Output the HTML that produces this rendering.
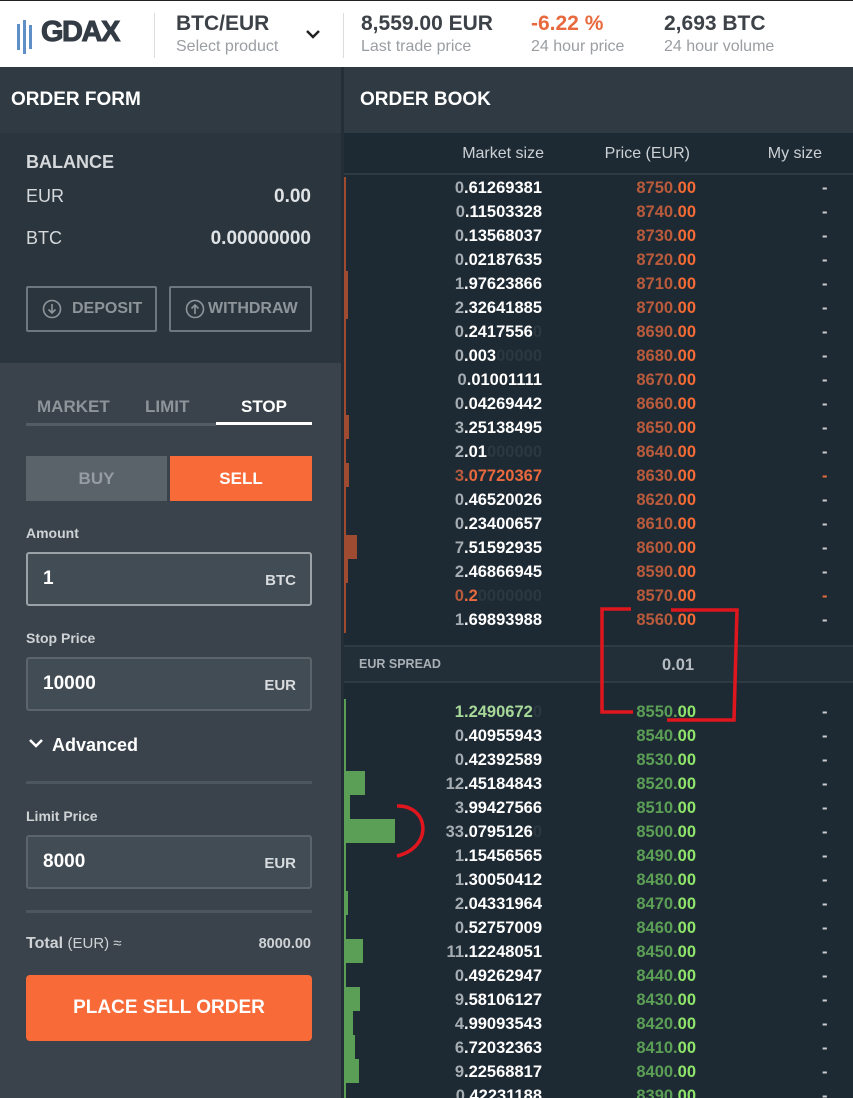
<!DOCTYPE html>
<html><head><meta charset="utf-8"><style>
*{margin:0;padding:0;box-sizing:border-box}
html,body{width:853px;height:1098px;overflow:hidden}
body{background:#1e2a33;font-family:"Liberation Sans",sans-serif;position:relative}
.hdr{position:absolute;left:0;top:0;width:853px;height:67px;background:#fff;border-top:1px solid #222}
.hdr .t{position:absolute;font-weight:bold;font-size:21px;color:#3d4248;top:11px}
.hdr .s{position:absolute;font-size:16px;color:#9a9ea2;top:37px}
.vs{position:absolute;top:12px;width:1px;height:45px;background:#ddd}
.left{position:absolute;left:0;top:67px;width:341px;height:1031px;background:#3a434b}
.sep{position:absolute;left:341px;top:67px;width:3px;height:1031px;background:#242e36}
.ph{position:absolute;height:66px;background:#2f3a42;color:#fff;font-weight:bold;font-size:19px;padding:22px 0 0 11px}
.bal{position:absolute;left:0;top:66px;width:341px;height:230px;background:#2b353d}
.w{color:#fff;font-weight:bold}
.lbl{position:absolute;color:#d5d9dc;font-size:18px}
.val{position:absolute;color:#dfe3e6;font-weight:bold;font-size:19px;right:30px}
.ob{position:absolute;border:2px solid #6e777e;border-radius:2px;color:#8d959b;font-weight:bold;font-size:16px;height:46px;top:219px}
.ob svg{position:absolute;left:14px;top:11px}
.tab{position:absolute;top:330px;font-weight:bold;font-size:17px;color:#8d959b}
.in{position:absolute;left:26px;width:286px;height:54px;border:2px solid #5b646b;border-radius:3px;background:#424c54}
.in b{position:absolute;left:15px;top:14px;font-size:19px;color:#fff}
.in i{position:absolute;right:14px;top:18px;font-size:15px;color:#d8dcdf;font-style:normal;font-weight:bold}
.fl{position:absolute;left:26px;font-weight:bold;font-size:14px;color:#cfd3d6}
.hr{position:absolute;left:26px;width:286px;height:3px;background:#4c565e}
.book{position:absolute;left:344px;top:67px;width:509px;height:1031px;background:#1e2a33}
.r{position:absolute;left:0;width:509px;height:24px;font-weight:bold;font-size:16.5px}
.r .z{position:absolute;right:311px;top:4px;color:#fff;white-space:nowrap}
.r .z u{color:#a5adb3;text-decoration:none}
.r .z s{color:#2c3740;text-decoration:none}
.r .p{position:absolute;right:157px;top:4px}
.r .d{position:absolute;left:478px;top:4px;color:#ccc}
.a .p{color:#b85a3c}.a .p em{color:#f26a36;font-style:normal}
.b .p{color:#5b9e55}.b .p em{color:#8ee56b;font-style:normal}
.bar{position:absolute;left:0;top:0;height:24px}
.a .bar{background:#9e4b31}.b .bar{background:#5b9e55}
</style></head><body>
<div class="hdr">
<svg style="position:absolute;left:17px;top:19px" width="22" height="34"><rect x="0" y="4" width="3" height="26" fill="#5e8fc6"/><rect x="6" y="0" width="3" height="34" fill="#5e8fc6"/><rect x="12" y="5" width="3" height="24" fill="#5e8fc6"/></svg>
<div class="t" style="left:41px;top:15px;font-size:29px;color:#333b45;letter-spacing:-1.5px;-webkit-text-stroke:1px #333b45">GDAX</div>
<div class="vs" style="left:154px"></div>
<div class="t" style="left:176px">BTC/EUR</div><div class="s" style="left:176px">Select product</div>
<svg style="position:absolute;left:305px;top:28px" width="16" height="12"><path d="M2 2 L8 8 L14 2" stroke="#222" stroke-width="2.5" fill="none"/></svg>
<div class="vs" style="left:343px"></div>
<div class="t" style="left:361px">8,559.00 EUR</div><div class="s" style="left:361px">Last trade price</div>
<div class="t" style="left:531px;color:#e8693e">-6.22 %</div><div class="s" style="left:531px">24 hour price</div>
<div class="t" style="left:664px">2,693 BTC</div><div class="s" style="left:664px">24 hour volume</div>
</div>
<div class="left">
<div class="ph" style="left:0;top:0;width:341px">ORDER FORM</div>
<div class="bal">
<div class="lbl w" style="left:26px;top:19px">BALANCE</div>
<div class="lbl" style="left:26px;top:53px">EUR</div><div class="val" style="top:53px">0.00</div>
<div class="lbl" style="left:26px;top:95px">BTC</div><div class="val" style="top:95px">0.00000000</div>
</div>
<div class="ob" style="left:26px;width:131px"><svg width="20" height="20"><circle cx="10" cy="10" r="8.5" stroke="#8d959b" stroke-width="1.6" fill="none"/><path d="M10 5v9M6.5 10.5 10 14l3.5-3.5" stroke="#8d959b" stroke-width="1.6" fill="none"/></svg><span style="position:absolute;left:44px;top:12px">DEPOSIT</span></div>
<div class="ob" style="left:169px;width:143px"><svg width="20" height="20"><circle cx="10" cy="10" r="8.5" stroke="#8d959b" stroke-width="1.6" fill="none"/><path d="M10 15V6M6.5 9.5 10 6l3.5 3.5" stroke="#8d959b" stroke-width="1.6" fill="none"/></svg><span style="position:absolute;left:37px;top:12px">WITHDRAW</span></div>
<div class="tab" style="left:37px">MARKET</div>
<div class="tab" style="left:145px">LIMIT</div>
<div class="tab" style="left:241px;color:#fff">STOP</div>
<div style="position:absolute;left:26px;top:356px;width:190px;height:3px;background:#535c63"></div>
<div style="position:absolute;left:216px;top:355px;width:96px;height:3px;background:#fff"></div>
<div style="position:absolute;left:26px;top:389px;width:141px;height:45px;background:#5a636a;color:#959da3;font-weight:bold;font-size:17px;text-align:center;line-height:45px">BUY</div>
<div style="position:absolute;left:170px;top:389px;width:142px;height:45px;background:#f86a38;color:#fff;font-weight:bold;font-size:17px;text-align:center;line-height:45px">SELL</div>
<div class="fl" style="top:458px">Amount</div>
<div class="in" style="top:485px;border-color:#9ba3a9"><b>1</b><i>BTC</i></div>
<div class="fl" style="top:563px">Stop Price</div>
<div class="in" style="top:590px"><b>10000</b><i>EUR</i></div>
<svg style="position:absolute;left:28px;top:671px" width="16" height="12"><path d="M2 2 L8 8 L14 2" stroke="#fff" stroke-width="2.5" fill="none"/></svg>
<div class="fl" style="left:52px;top:668px;font-size:18px;color:#fff">Advanced</div>
<div class="hr" style="top:714px"></div>
<div class="fl" style="top:741px">Limit Price</div>
<div class="in" style="top:768px"><b>8000</b><i>EUR</i></div>
<div class="hr" style="top:843px"></div>
<div class="fl" style="top:868px;font-size:16px;color:#cfd3d6">Total <span style="font-weight:normal;font-size:15px">(EUR) ≈</span></div>
<div class="fl" style="left:auto;right:30px;top:869px;font-size:14.5px">8000.00</div>
<div style="position:absolute;left:26px;top:908px;width:286px;height:66px;background:#f86a38;border-radius:4px;color:#fff;font-weight:bold;font-size:19px;text-align:center;line-height:66px">PLACE SELL ORDER</div>
</div>
<div class="sep"></div>
<div class="book">
<div class="ph" style="left:0;top:0;width:509px;padding-left:16px">ORDER BOOK</div>
<div style="position:absolute;top:66px;left:0;width:509px;height:42px;border-bottom:2px solid #2f3a42;color:#ccd1d5;font-size:16px">
<span style="position:absolute;right:309px;top:12px">Market size</span><span style="position:absolute;right:163px;top:12px">Price (EUR)</span><span style="position:absolute;right:31px;top:12px">My size</span></div>
<div style="position:absolute;left:0;top:110px;width:2px;height:456px;background:#9e4b31"></div>
<div class="r a" style="top:108px"><div class="z"><u>0</u>.61269381</div><div class="p">8750.<em>00</em></div><div class="d">-</div></div>
<div class="r a" style="top:132px"><div class="z"><u>0</u>.11503328</div><div class="p">8740.<em>00</em></div><div class="d">-</div></div>
<div class="r a" style="top:156px"><div class="z"><u>0</u>.13568037</div><div class="p">8730.<em>00</em></div><div class="d">-</div></div>
<div class="r a" style="top:180px"><div class="z"><u>0</u>.02187635</div><div class="p">8720.<em>00</em></div><div class="d">-</div></div>
<div class="r a" style="top:204px"><div class="bar" style="width:4px"></div><div class="z"><u>1</u>.97623866</div><div class="p">8710.<em>00</em></div><div class="d">-</div></div>
<div class="r a" style="top:228px"><div class="bar" style="width:4px"></div><div class="z"><u>2</u>.32641885</div><div class="p">8700.<em>00</em></div><div class="d">-</div></div>
<div class="r a" style="top:252px"><div class="z"><u>0</u>.2417556<s>0</s></div><div class="p">8690.<em>00</em></div><div class="d">-</div></div>
<div class="r a" style="top:276px"><div class="z"><u>0</u>.003<s>00000</s></div><div class="p">8680.<em>00</em></div><div class="d">-</div></div>
<div class="r a" style="top:300px"><div class="z"><u>0</u>.01001111</div><div class="p">8670.<em>00</em></div><div class="d">-</div></div>
<div class="r a" style="top:324px"><div class="z"><u>0</u>.04269442</div><div class="p">8660.<em>00</em></div><div class="d">-</div></div>
<div class="r a" style="top:348px"><div class="bar" style="width:5px"></div><div class="z"><u>3</u>.25138495</div><div class="p">8650.<em>00</em></div><div class="d">-</div></div>
<div class="r a" style="top:372px"><div class="bar" style="width:2px"></div><div class="z"><u>2</u>.01<s>000000</s></div><div class="p">8640.<em>00</em></div><div class="d">-</div></div>
<div class="r a" style="top:396px"><div class="bar" style="width:5px"></div><div class="z" style="color:#e8693e"><u style="color:#b85a3c">3</u>.07720367</div><div class="p">8630.<em>00</em></div><div class="d" style="color:#e8693e">-</div></div>
<div class="r a" style="top:420px"><div class="z"><u>0</u>.46520026</div><div class="p">8620.<em>00</em></div><div class="d">-</div></div>
<div class="r a" style="top:444px"><div class="z"><u>0</u>.23400657</div><div class="p">8610.<em>00</em></div><div class="d">-</div></div>
<div class="r a" style="top:468px"><div class="bar" style="width:13px"></div><div class="z"><u>7</u>.51592935</div><div class="p">8600.<em>00</em></div><div class="d">-</div></div>
<div class="r a" style="top:492px"><div class="bar" style="width:4px"></div><div class="z"><u>2</u>.46866945</div><div class="p">8590.<em>00</em></div><div class="d">-</div></div>
<div class="r a" style="top:516px"><div class="z" style="color:#e8693e"><u style="color:#b85a3c">0</u>.2<s>0000000</s></div><div class="p">8570.<em>00</em></div><div class="d" style="color:#e8693e">-</div></div>
<div class="r a" style="top:540px"><div class="z"><u>1</u>.69893988</div><div class="p">8560.<em>00</em></div><div class="d">-</div></div>
<div style="position:absolute;left:0;top:578px;width:509px;height:38px;background:#232f38;border-top:2px solid #2f3a42;border-bottom:2px solid #2f3a42">
<span style="position:absolute;left:15px;top:10px;font-weight:bold;font-size:12.5px;color:#a9b0b5">EUR SPREAD</span>
<span style="position:absolute;left:318px;top:9px;font-weight:bold;font-size:16.5px;color:#b5bbc0">0.01</span></div>
<div style="position:absolute;left:0;top:632px;width:2px;height:399px;background:#5b9e55"></div>
<div class="r b" style="top:632px"><div class="z" style="color:#a7d89a"><u style="color:#a7d89a">1</u>.2490672<s>0</s></div><div class="p">8550.<em>00</em></div><div class="d">-</div></div>
<div class="r b" style="top:656px"><div class="z"><u>0</u>.40955943</div><div class="p">8540.<em>00</em></div><div class="d">-</div></div>
<div class="r b" style="top:680px"><div class="z"><u>0</u>.42392589</div><div class="p">8530.<em>00</em></div><div class="d">-</div></div>
<div class="r b" style="top:704px"><div class="bar" style="width:21px"></div><div class="z"><u>12</u>.45184843</div><div class="p">8520.<em>00</em></div><div class="d">-</div></div>
<div class="r b" style="top:728px"><div class="bar" style="width:6px"></div><div class="z"><u>3</u>.99427566</div><div class="p">8510.<em>00</em></div><div class="d">-</div></div>
<div class="r b" style="top:752px"><div class="bar" style="width:51px"></div><div class="z"><u>33</u>.0795126<s>0</s></div><div class="p">8500.<em>00</em></div><div class="d">-</div></div>
<div class="r b" style="top:776px"><div class="z"><u>1</u>.15456565</div><div class="p">8490.<em>00</em></div><div class="d">-</div></div>
<div class="r b" style="top:800px"><div class="z"><u>1</u>.30050412</div><div class="p">8480.<em>00</em></div><div class="d">-</div></div>
<div class="r b" style="top:824px"><div class="bar" style="width:4px"></div><div class="z"><u>2</u>.04331964</div><div class="p">8470.<em>00</em></div><div class="d">-</div></div>
<div class="r b" style="top:848px"><div class="z"><u>0</u>.52757009</div><div class="p">8460.<em>00</em></div><div class="d">-</div></div>
<div class="r b" style="top:872px"><div class="bar" style="width:19px"></div><div class="z"><u>11</u>.12248051</div><div class="p">8450.<em>00</em></div><div class="d">-</div></div>
<div class="r b" style="top:896px"><div class="z"><u>0</u>.49262947</div><div class="p">8440.<em>00</em></div><div class="d">-</div></div>
<div class="r b" style="top:920px"><div class="bar" style="width:16px"></div><div class="z"><u>9</u>.58106127</div><div class="p">8430.<em>00</em></div><div class="d">-</div></div>
<div class="r b" style="top:944px"><div class="bar" style="width:9px"></div><div class="z"><u>4</u>.99093543</div><div class="p">8420.<em>00</em></div><div class="d">-</div></div>
<div class="r b" style="top:968px"><div class="bar" style="width:11px"></div><div class="z"><u>6</u>.72032363</div><div class="p">8410.<em>00</em></div><div class="d">-</div></div>
<div class="r b" style="top:992px"><div class="bar" style="width:15px"></div><div class="z"><u>9</u>.22568817</div><div class="p">8400.<em>00</em></div><div class="d">-</div></div>
<div class="r b" style="top:1016px"><div class="z"><u>0</u>.42231188</div><div class="p">8390.<em>00</em></div><div class="d">-</div></div>
<svg style="position:absolute;left:0;top:0" width="509" height="1031"><path d="M287 542 L258 542 L258 645 L289 645 M327 543 L393 543 L390 653 L323 653" stroke="#e0161e" stroke-width="3.5" fill="none"/><path d="M53 739 C85 738 90 780 53 789" stroke="#e0161e" stroke-width="3.5" fill="none"/></svg>
</div>
</body></html>
